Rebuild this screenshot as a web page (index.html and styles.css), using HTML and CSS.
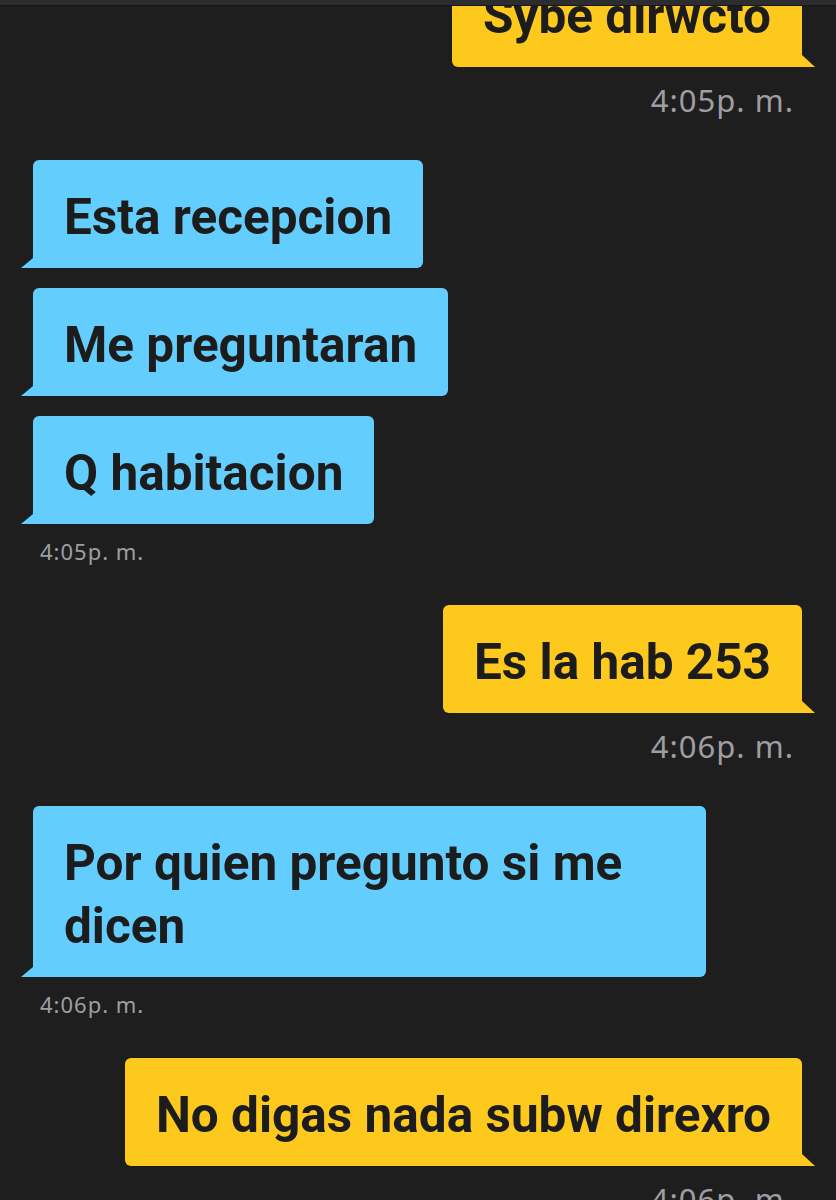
FILE: index.html
```html
<!DOCTYPE html>
<html lang="es">
<head>
  <meta charset="UTF-8" />
  <meta name="viewport" content="width=device-width, initial-scale=1.0"/>
  <title>Chat</title>
  <link rel="stylesheet" href="styles.css">
</head>
<body>
  <!-- Top bar -->
  <div class="topbar"></div>
  <!-- Messages -->
  <div class="chat">
    <div class="group sent first">
      <div class="bubble">Sybe dirwcto</div>
      <div class="time">4:05p. m.</div>
    </div>
    <div class="group received">
      <div class="bubble">Esta recepcion</div>
      <div class="bubble">Me preguntaran</div>
      <div class="bubble">Q habitacion</div>
      <div class="time">4:05p. m.</div>
    </div>
    <div class="group sent">
      <div class="bubble">Es la hab 253</div>
      <div class="time">4:06p. m.</div>
    </div>
    <div class="group received">
      <div class="bubble wide">Por quien pregunto si me dicen</div>
      <div class="time">4:06p. m.</div>
    </div>
    <div class="group sent">
      <div class="bubble">No digas nada subw direxro</div>
      <div class="time">4:06p. m.</div>
    </div>
  </div>
</body>
</html>
```

FILE: styles.css
```css
/* Reset */
* { margin: 0; padding: 0; box-sizing: border-box; }
html, body { height: 100%; }
body {
  background: #1e1e1e;
  font-family: Roboto, "Noto Sans", sans-serif;
  overflow: hidden;
}
/* Top bar */
.topbar {
  position: relative;
  z-index: 2;
  height: 6px;
  background: #2d2d2f;
  border-bottom: 1px solid #171717;
}
/* Chat list */
.chat {
  display: flex;
  flex-direction: column;
  gap: 43px;
  margin-top: -47px;
}
.group {
  display: flex;
  flex-direction: column;
  gap: 20px;
}
.group.sent { align-items: flex-end; padding-right: 34px; }
.group.received { align-items: flex-start; padding-left: 33px; }
/* Bubbles */
.bubble {
  position: relative;
  max-width: 690px;
  padding: 26px 31px 19px;
  border-radius: 6px;
  font-size: 49.5px;
  font-weight: 700;
  line-height: 63px;
  color: #1c1c1c;
}
.bubble.wide { width: 673px; }
.bubble::after {
  content: "";
  position: absolute;
  bottom: 0;
}
.sent .bubble {
  background: #fdc91d;
  border-bottom-right-radius: 0;
}
.sent .bubble::after {
  right: -13px;
  width: 13px;
  height: 12px;
  background: #fdc91d;
  clip-path: polygon(0 0, 100% 100%, 0 100%);
}
.received .bubble {
  background: #63cdfd;
  border-bottom-left-radius: 0;
}
.received .bubble::after {
  left: -12px;
  width: 12px;
  height: 10px;
  background: #63cdfd;
  clip-path: polygon(100% 0, 100% 100%, 0 100%);
}
/* Timestamps */
.time {
  color: #9e9ea2;
  font-family: "Noto Sans", Roboto, sans-serif;
  letter-spacing: 1px;
}
.sent .time {
  font-size: 31px;
  line-height: 34px;
  margin-top: -4px;
  padding-right: 8px;
}
.received .time {
  font-size: 22px;
  line-height: 26px;
  margin-top: -6px;
  margin-bottom: -2px;
  padding-left: 7px;
}
```
